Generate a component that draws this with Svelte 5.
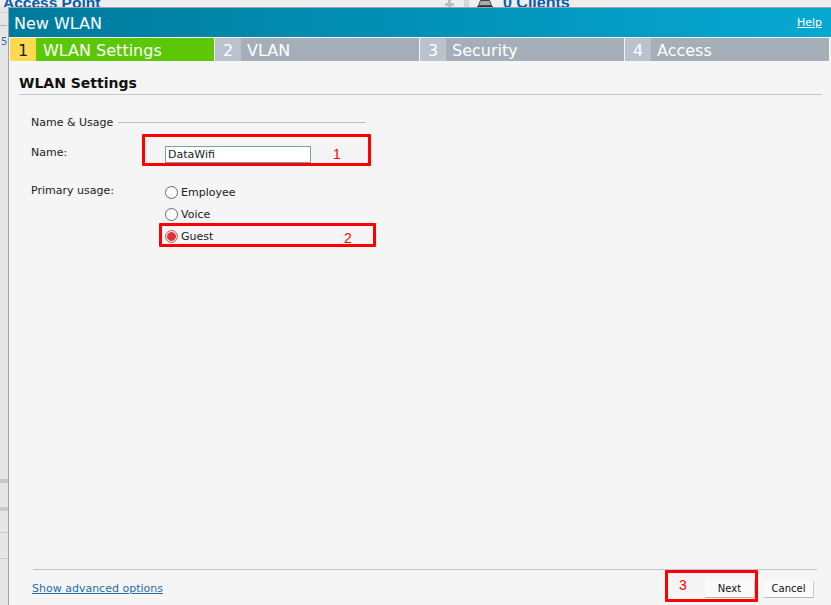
<script>
  const steps = [
    { n: 1, label: 'WLAN Settings', active: true },
    { n: 2, label: 'VLAN' },
    { n: 3, label: 'Security' },
    { n: 4, label: 'Access' }
  ];
  const usages = ['Employee', 'Voice', 'Guest'];
  let usage = 'Guest';
  let name = 'DataWifi';
</script>

<div class="page">
  <div class="behind-top">
    <span class="ap">Access Point</span>
    <span class="plus"></span>
    <span class="sep"></span>
    <svg class="cl" width="16" height="7" viewBox="0 0 16 7"><path d="M3.5 0.5h9l2 5h-13z" fill="#aaa" stroke="#444" stroke-width="1"/><path d="M0 6.5h16" stroke="#333"/></svg>
    <span class="clients">0 Clients</span>
  </div>
  <div class="behind-body">
    <div class="side">
      <span class="five">5</span>
      <div class="side-rows">
        <i></i><i></i><i></i><i></i><i></i><b></b>
      </div>
    </div>
    <div class="dialog">
      <header>
        <span class="title">New WLAN</span>
        <a href="#help" class="help">Help</a>
      </header>
      <nav class="steps">
        {#each steps as s}
          <div class="step" class:active={s.active}>
            <span class="num">{s.n}</span>
            <span class="label">{s.label}</span>
          </div>
        {/each}
      </nav>
      <div class="content">
        <h2>WLAN Settings</h2>
        <div class="group">
          <span>Name &amp; Usage</span>
          <hr />
        </div>
        <div class="row name-row">
          <label for="wlan-name">Name:</label>
          <input id="wlan-name" bind:value={name} />
        </div>
        <div class="row usage-row">
          <span class="lbl">Primary usage:</span>
          <div class="radios">
            {#each usages as u}
              <label class="radio">
                <input type="radio" bind:group={usage} value={u} />
                <span class="dot"></span>
                {u}
              </label>
            {/each}
          </div>
        </div>
        <div class="spacer"></div>
        <footer>
          <a href="#adv">Show advanced options</a>
          <div class="buttons">
            <button>Next</button>
            <button>Cancel</button>
          </div>
        </footer>
      </div>
    </div>
  </div>

  <div class="mark m1"></div><span class="no n1">1</span>
  <div class="mark m2"></div><span class="no n2">2</span>
  <div class="mark m3"></div><span class="no n3">3</span>
</div>

<style>
  :global(body) {
    margin: 0;
    background: #f5f5f5;
  }
  .page {
    position: relative;
    width: 831px;
    height: 605px;
    overflow: hidden;
    font-family: "DejaVu Sans", Verdana, sans-serif;
    font-size: 11px;
    color: #222;
  }
  .behind-top {
    height: 7px;
    background: #eeeeee;
    display: flex;
    align-items: flex-end;
    overflow: hidden;
  }
  .ap, .clients {
    font-family: "Liberation Sans", sans-serif;
    font-size: 16px;
    font-weight: bold;
    color: #0a5ca8;
    line-height: 14px;
    height: 7px;
    white-space: nowrap;
    display: block;
    margin-bottom: 4px;
  }
  .ap {
    font-size: 15.5px;
    margin-left: 3px;
    width: 442px;
  }
  .plus {
    width: 9px;
    height: 7px;
    flex: none;
    background:
      linear-gradient(#bdbdbd, #bdbdbd) center 3px / 9px 3px no-repeat,
      linear-gradient(#bdbdbd, #bdbdbd) center 0 / 3px 7px no-repeat;
  }
  .sep {
    width: 5px;
    height: 7px;
    background: #d6d6d6;
    margin-left: 10px;
    flex: none;
  }
  .cl {
    margin-left: 8px;
    margin-right: 10px;
    flex: none;
  }
  .behind-body {
    display: flex;
    height: 598px;
  }
  .side {
    width: 8px;
    background: #e6e6e6;
    position: relative;
    flex: none;
  }
  .five {
    color: #2a6ca8;
    font-size: 10px;
    position: absolute;
    top: 29px;
    left: 1px;
    line-height: 12px;
  }
  .side-rows i {
    position: absolute;
    left: 0;
    width: 8px;
    background: #c9c9c9;
    height: 3px;
  }
  .side-rows i:nth-child(1) { top: 472px; height: 4px; }
  .side-rows i:nth-child(2) { top: 500px; height: 4px; }
  .side-rows i:nth-child(3) { top: 525px; height: 1px; background: #c6cbda; }
  .side-rows i:nth-child(4) { top: 551px; height: 1px; background: #c6cbda; }
  .side-rows i:nth-child(5) { top: 5px; height: 1px; background: #d4d4d4; }
  .side-rows b {
    position: absolute;
    left: 0;
    top: 18px;
    width: 7px;
    height: 1px;
    background: #b5b5b5;
  }
  .dialog {
    flex: 1;
    border-left: 1px solid #9ea3ab;
    border-top: 1px solid #9ea3ab;
    background: #f5f5f5;
    display: flex;
    flex-direction: column;
  }
  header {
    height: 29px;
    background: linear-gradient(90deg, #007a9c, #06a8d2);
    display: flex;
    align-items: center;
    justify-content: space-between;
    padding: 0 9px 0 5px;
    border-bottom: 1px solid #f5f5f5;
    flex: none;
  }
  .title {
    color: #fff;
    font-size: 16px;
    padding-top: 2px;
  }
  .help {
    color: #fff;
    font-size: 11px;
    text-decoration: underline;
  }
  .steps {
    display: flex;
    gap: 1px;
    height: 23px;
    padding-left: 1px;
    flex: none;
  }
  .step {
    display: flex;
    width: 204px;
    background: #a4afba;
    color: #fff;
    font-size: 16px;
    line-height: 25px;
    flex: none;
    overflow: hidden;
  }
  .step .num {
    width: 26px;
    background: #b9c2cd;
    text-align: center;
    flex: none;
  }
  .step .label {
    padding-left: 6px;
  }
  .step.active .label {
    padding-left: 7px;
  }
  .step.active {
    background: #5cc805;
  }
  .step.active .num {
    background: #ffd94f;
    color: #222;
  }
  .content {
    flex: 1;
    display: flex;
    flex-direction: column;
    padding: 0 9px 0 10px;
    min-height: 0;
  }
  h2 {
    margin: 13px 0 0;
    font-size: 14px;
    line-height: 18px;
    color: #111;
    padding-bottom: 2px;
    border-bottom: 1px solid #c2c8da;
    font-weight: bold;
  }
  .group {
    display: flex;
    align-items: center;
    margin: 21px 0 0 12px;
    width: 335px;
    line-height: 13px;
  }
  .group hr {
    flex: 1;
    border: none;
    border-top: 1px solid #b9bec9;
    margin: 0 0 0 5px;
  }
  .row {
    display: flex;
    margin-left: 12px;
  }
  .row > label, .lbl {
    width: 134px;
    flex: none;
  }
  .name-row {
    margin-top: 17px;
    line-height: 13px;
  }
  .name-row input {
    width: 140px;
    height: 15px;
    padding: 0 2px;
    margin: 0;
    border: 1px solid #7f9db0;
    background: #fff;
    font: 11px "DejaVu Sans", Verdana, sans-serif;
    color: #222;
    outline: none;
  }
  .usage-row {
    margin-top: 21px;
    line-height: 13px;
  }
  .radios {
    display: flex;
    flex-direction: column;
    gap: 9px;
    margin-top: 2px;
  }
  .radio {
    display: flex;
    align-items: center;
    gap: 3px;
    height: 13px;
    white-space: nowrap;
  }
  .radio input {
    display: none;
  }
  .dot {
    width: 11px;
    height: 11px;
    border: 1px solid #666;
    border-radius: 50%;
    background: #fff;
    flex: none;
    box-sizing: content-box;
  }
  .radio input:checked + .dot {
    border-color: #d9505a;
    background: radial-gradient(circle, #e0303a 0 4px, #fbe9ea 4.7px);
  }
  .spacer {
    flex: 1;
  }
  footer {
    border-top: 1px solid #b9c1cd;
    margin: 0 5px 0 14px;
    height: 36px;
    display: flex;
    justify-content: space-between;
    align-items: center;
    padding-top: 1px;
    box-sizing: border-box;
    flex: none;
  }
  footer a {
    color: #1f6da8;
    margin-left: -1px;
  }
  .buttons {
    display: flex;
    gap: 9px;
    margin: 2px 3px 0 0;
  }
  button {
    width: 49px;
    height: 16px;
    padding: 0;
    border: none;
    border-right: 1px solid #c8c8c8;
    border-bottom: 1px solid #b8b8b8;
    background: #fafafa;
    box-sizing: content-box;
    font: 10px "DejaVu Sans", Verdana, sans-serif;
    color: #111;
  }
  .mark {
    position: absolute;
    border: 3px solid #f00;
    border-radius: 1px;
    box-sizing: border-box;
  }
  .m1 { left: 142px; top: 134px; width: 229px; height: 32px; }
  .m2 { left: 159px; top: 223px; width: 217px; height: 24px; }
  .m3 { left: 665px; top: 570px; width: 93px; height: 32px; }
  .no {
    position: absolute;
    color: #f00;
    font-family: "Liberation Sans", sans-serif;
    font-size: 14px;
    line-height: 16px;
  }
  .n1 { left: 333px; top: 146px; }
  .n2 { left: 344px; top: 230px; }
  .n3 { left: 679px; top: 577px; }
</style>
